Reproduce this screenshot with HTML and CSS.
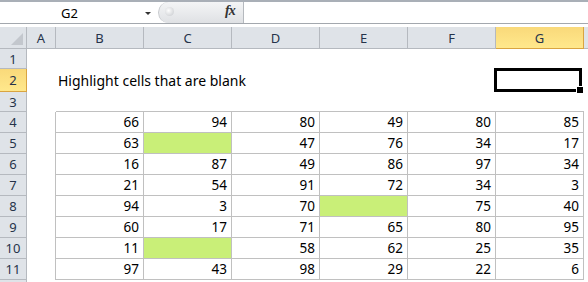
FILE: index.html
```html
<!DOCTYPE html>
<html lang="en">
<head>
    <meta charset="UTF-8">
    <title>Highlight blank cells</title>
    <link rel="stylesheet" href="styles.css">
</head>
<body>
    <div class="formula-bar">
        <div class="name-box">
            <span class="name">G2</span>
            <span class="arrow"></span>
        </div>
        <div class="fx-handle">
            <span class="knob"></span>
            <span class="fx">fx</span>
        </div>
        <div class="formula-input"></div>
    </div>

    <div class="sheet">
        <!-- column headers -->
        <div class="corner"></div>
        <div class="hd">A</div>
        <div class="hd">B</div>
        <div class="hd">C</div>
        <div class="hd">D</div>
        <div class="hd">E</div>
        <div class="hd">F</div>
        <div class="hd sel">G</div>
        <div class="hd end"></div>

        <!-- row 1 -->
        <div class="rh">1</div>
        <div class="c"></div><div class="c"></div><div class="c"></div><div class="c"></div>
        <div class="c"></div><div class="c"></div><div class="c"></div><div class="c end"></div>

        <!-- row 2 -->
        <div class="rh sel">2</div>
        <div class="c"></div>
        <div class="c title">Highlight cells that are blank</div>
        <div class="c"></div><div class="c"></div><div class="c"></div><div class="c"></div>
        <div class="c active"><span class="cursor"><span class="fill-handle"></span></span></div>
        <div class="c end"></div>

        <!-- row 3 -->
        <div class="rh">3</div>
        <div class="c"></div>
        <div class="c top"></div><div class="c top"></div><div class="c top"></div>
        <div class="c top"></div><div class="c top"></div><div class="c top"></div>
        <div class="c end"></div>

        <!-- rows 4-11 -->
        <div class="rh">4</div>
        <div class="c left"></div>
        <div class="c t">66</div><div class="c t">94</div><div class="c t">80</div>
        <div class="c t">49</div><div class="c t">80</div><div class="c t">85</div>
        <div class="c end"></div>

        <div class="rh">5</div>
        <div class="c left"></div>
        <div class="c t">63</div><div class="c t blank"></div><div class="c t">47</div>
        <div class="c t">76</div><div class="c t">34</div><div class="c t">17</div>
        <div class="c end"></div>

        <div class="rh">6</div>
        <div class="c left"></div>
        <div class="c t">16</div><div class="c t">87</div><div class="c t">49</div>
        <div class="c t">86</div><div class="c t">97</div><div class="c t">34</div>
        <div class="c end"></div>

        <div class="rh">7</div>
        <div class="c left"></div>
        <div class="c t">21</div><div class="c t">54</div><div class="c t">91</div>
        <div class="c t">72</div><div class="c t">34</div><div class="c t">3</div>
        <div class="c end"></div>

        <div class="rh">8</div>
        <div class="c left"></div>
        <div class="c t">94</div><div class="c t">3</div><div class="c t">70</div>
        <div class="c t blank"></div><div class="c t">75</div><div class="c t">40</div>
        <div class="c end"></div>

        <div class="rh">9</div>
        <div class="c left"></div>
        <div class="c t">60</div><div class="c t">17</div><div class="c t">71</div>
        <div class="c t">65</div><div class="c t">80</div><div class="c t">95</div>
        <div class="c end"></div>

        <div class="rh">10</div>
        <div class="c left"></div>
        <div class="c t">11</div><div class="c t blank"></div><div class="c t">58</div>
        <div class="c t">62</div><div class="c t">25</div><div class="c t">35</div>
        <div class="c end"></div>

        <div class="rh">11</div>
        <div class="c left"></div>
        <div class="c t">97</div><div class="c t">43</div><div class="c t">98</div>
        <div class="c t">29</div><div class="c t">22</div><div class="c t">6</div>
        <div class="c end"></div>

        <!-- row 12, only its top edge shows -->
        <div class="rh"></div>
        <div class="c"></div><div class="c"></div><div class="c"></div><div class="c"></div>
        <div class="c"></div><div class="c"></div><div class="c"></div><div class="c end"></div>
    </div>
</body>
</html>
```

FILE: styles.css
```css
body {
    margin: 0;
    background-color: #fff;
    font-family: "Noto Sans", "Open Sans", sans-serif;
    font-size: 13px;
    color: #000;
    overflow: hidden;
}

/* formula bar */

.formula-bar {
    display: flex;
    height: 21px;
    border-top: 2px solid #a9afb7;
    border-bottom: 1px solid #a3a8ae;
}

.name-box {
    width: 158px;
    position: relative;
    display: flex;
    align-items: center;
}

.name {
    margin-left: 61px;
    font-size: 13px;
}

.arrow {
    position: absolute;
    left: 145px;
    top: 10px;
    width: 0;
    height: 0;
    border-left: 3px solid transparent;
    border-right: 3px solid transparent;
    border-top: 3px solid #333;
}

.fx-handle {
    width: 84px;
    position: relative;
    background: linear-gradient(#f4f5f6, #dfe1e4);
    border-left: 1px solid #c6c9cd;
    border-right: 1px solid #b5b9be;
    border-radius: 11px 0 0 11px;
}

.knob {
    position: absolute;
    left: 6px;
    top: 5px;
    width: 9px;
    height: 9px;
    border-radius: 50%;
    background: radial-gradient(circle at 40% 40%, #fdfdfd, #c4c7cb);
}

.fx {
    position: absolute;
    left: 66px;
    top: 1px;
    font-family: "Liberation Serif", serif;
    font-style: italic;
    font-weight: bold;
    font-size: 14px;
    color: #333;
    letter-spacing: -1px;
}

.formula-input {
    flex: 1;
}

/* sheet grid */

.sheet {
    margin-top: 3px;
    display: grid;
    grid-template-columns: 27px 29px repeat(6, 88px) 1fr;
    grid-template-rows: 22px 20px 23px 20px repeat(8, 21px) 21px;
}

.sheet > div {
    box-sizing: border-box;
}

.corner,
.hd,
.rh {
    background-color: #dfe3e8;
    color: #26334a;
    border-right: 1px solid #b5b9bf;
    border-bottom: 1px solid #b5b9bf;
    display: flex;
    align-items: center;
    justify-content: center;
    font-size: 13px;
}

.corner {
    position: relative;
}

.corner::after {
    content: "";
    position: absolute;
    right: 3px;
    bottom: 3px;
    border-left: 12px solid transparent;
    border-bottom: 12px solid #c3c7cd;
}

.hd.end {
    border-right: none;
}

.hd.sel,
.rh.sel {
    background: linear-gradient(#f9d97a, #ffe88c);
    border-right-color: #d9a441;
    border-bottom-color: #d9a441;
}

.c {
    position: relative;
    display: flex;
    align-items: flex-end;
    justify-content: flex-end;
    padding: 0 4px 1px 0;
    font-size: 13.5px;
}

.title {
    justify-content: flex-start;
    white-space: nowrap;
    padding: 0 0 2px 2px;
    font-size: 14px;
}

.top {
    border-bottom: 1px solid #c0c0c0;
}

.left {
    border-right: 1px solid #c0c0c0;
}

.t {
    border-right: 1px solid #c0c0c0;
    border-bottom: 1px solid #c0c0c0;
}

.blank {
    background-color: #c9ef78;
}

.cursor {
    position: absolute;
    left: -2px;
    top: -1px;
    width: 88px;
    height: 24px;
    box-sizing: border-box;
    border: 3px solid #000;
}

.fill-handle {
    position: absolute;
    right: -5px;
    bottom: -5px;
    width: 6px;
    height: 6px;
    background-color: #000;
    border: 1px solid #fff;
}
```
